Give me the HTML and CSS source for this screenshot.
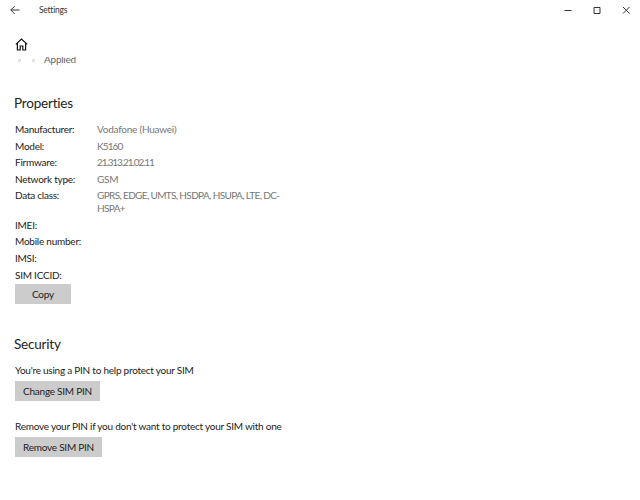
FILE: index.html
```html
<!doctype html>
<html lang="en">

<head>
    <meta charset="utf-8" />
    <title>Settings</title>
    <link rel="stylesheet" href="styles.css">
</head>

<body>
    <div class="title-bar">
        <svg class="back-icon" width="10" height="10" viewBox="0 0 10 10">
            <path d="M9.5 5H.8M4.6 1.2.8 5l3.8 3.8" />
        </svg>
        <div class="title-text">Settings</div>
        <div class="window-btns">
            <svg width="10" height="10" viewBox="0 0 10 10"><path d="M1.5 5.5h7" /></svg>
            <svg width="10" height="10" viewBox="0 0 10 10"><path d="M2 2.5h6v6H2z" /></svg>
            <svg width="10" height="10" viewBox="0 0 10 10"><path d="M2 2l6.500 6.500M8.500 2 2 8.500" /></svg>
        </div>
    </div>

    <div class="home-row">
        <svg class="home-icon" width="13" height="13" viewBox="0 0 13 13">
            <path d="M.8 6.400 6.500 1l5.700 5.400M2.400 5v7h2.800V8h2.600v4h2.800V5" />
        </svg>
    </div>

    <div class="content">
        <div class="applied-row">
            <span class="faint-dot"></span>
            <span class="faint-dot"></span>
            <span class="applied">Applied</span>
        </div>

        <h2 class="section-title">Properties</h2>
        <div class="props">
            <div class="prop-label">Manufacturer:</div>
            <div class="prop-value">Vodafone (Huawei)</div>
            <div class="prop-label">Model:</div>
            <div class="prop-value prop-value-model">K5160</div>
            <div class="prop-label">Firmware:</div>
            <div class="prop-value prop-value-digits">21.313.21.02.11</div>
            <div class="prop-label">Network type:</div>
            <div class="prop-value">GSM</div>
            <div class="prop-label">Data class:</div>
            <div class="prop-value prop-value-long">GPRS, EDGE, UMTS, HSDPA, HSUPA, LTE, DC-HSPA+</div>
            <div class="prop-label">IMEI:</div>
            <div class="prop-value"></div>
            <div class="prop-label">Mobile number:</div>
            <div class="prop-value"></div>
            <div class="prop-label">IMSI:</div>
            <div class="prop-value"></div>
            <div class="prop-label">SIM ICCID:</div>
            <div class="prop-value"></div>
        </div>
        <button class="btn btn-copy">Copy</button>

        <h2 class="section-title security-title">Security</h2>
        <p class="note">You're using a PIN to help protect your SIM</p>
        <button class="btn btn-change">Change SIM PIN</button>
        <p class="note note-gap">Remove your PIN if you don't want to protect your SIM with one</p>
        <button class="btn btn-remove">Remove SIM PIN</button>
    </div>
</body>

</html>
```

FILE: styles.css
```css
* {
    box-sizing: border-box;
}

html,
body {
    margin: 0;
    height: 500px;
    overflow: hidden;
    background: #fff;
    color: #222;
    font-family: Lato, "Noto Sans", sans-serif;
    font-size: 10px;
    letter-spacing: -0.240px;
}

svg path {
    fill: none;
    stroke: #333;
    stroke-width: 1;
}

/* Title bar */
.title-bar {
    display: flex;
    align-items: center;
    height: 20px;
    padding-left: 10px;
}

.back-icon {
    margin-right: 19px;
}

.title-text {
    font-size: 8.500px;
    color: #333;
}

.window-btns {
    display: flex;
    gap: 19px;
    margin-left: auto;
    padding-right: 9px;
}

/* Home */
.home-row {
    height: 37px;
    padding: 18px 0 0 15px;
}

.home-icon path {
    stroke: #111;
    stroke-width: 1.200;
}

/* Scrolled content, clipped under the home row */
.content {
    height: 443px;
    padding: 0 15px 0 14px;
    overflow: hidden;
}

.applied-row {
    display: flex;
    align-items: flex-end;
    height: 7px;
    line-height: 14px;
    color: #666;
}

.applied {
    margin: 0 0 -2px 9px;
}

.faint-dot {
    width: 3px;
    height: 3px;
    margin: 0 0 2px 4px;
    background: #e4e4e4;
}

.faint-dot + .faint-dot {
    margin-left: 11px;
}

.section-title {
    margin: 29px 0 0;
    font-size: 13.500px;
    font-weight: 400;
    line-height: 20px;
    letter-spacing: -0.200px;
    color: #222;
}

.props {
    display: grid;
    grid-template-columns: 82px 200px;
    grid-auto-rows: minmax(16.600px, auto);
    margin: 8px 0 0 1px;
    line-height: 12.500px;
}

.prop-label {
    padding-top: 2px;
}

.prop-value {
    padding-top: 2px;
    padding-bottom: 2px;
    color: #777;
}

.prop-value-model {
    letter-spacing: -0.900px;
}

.prop-value-digits {
    letter-spacing: -1.100px;
}

.prop-value-long {
    padding-bottom: 2.500px;
    letter-spacing: -0.640px;
}

.btn {
    display: block;
    height: 20px;
    margin-left: 1px;
    padding: 0;
    border: 0;
    background: #ccc;
    color: #222;
    font-family: inherit;
    font-size: 10px;
    letter-spacing: inherit;
}

.btn-copy {
    width: 56px;
    margin-top: 0.500px;
}

.btn-change {
    width: 85px;
}

.btn-remove {
    width: 87px;
}

.security-title {
    margin-top: 30px;
}

.note {
    margin: 10px 0 5px 1px;
    line-height: 12px;
}

.note-gap {
    margin-top: 19px;
}
```
